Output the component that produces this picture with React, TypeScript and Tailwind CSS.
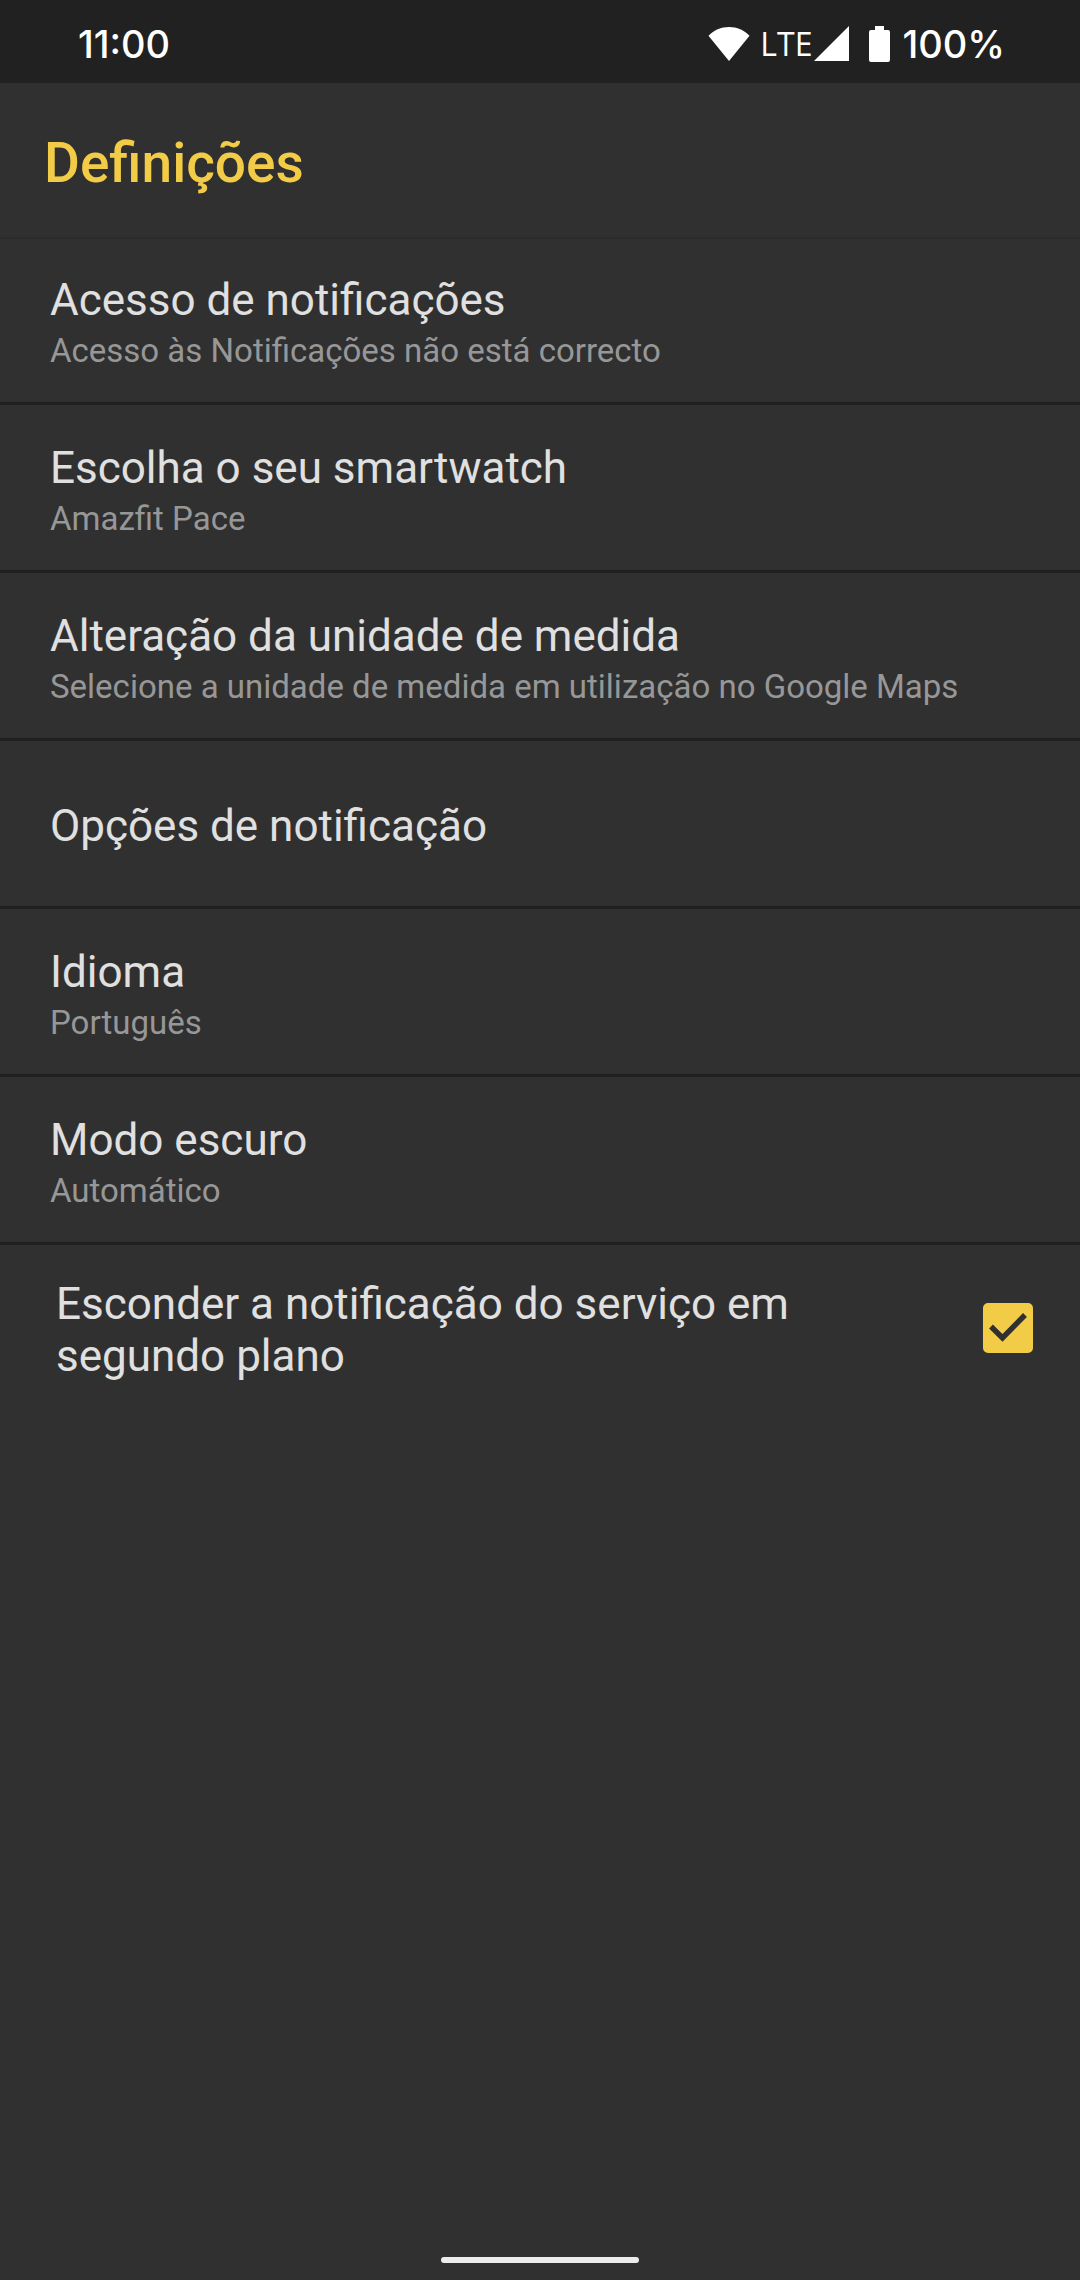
import { useState } from 'react';

interface SettingItem {
  id: string;
  title: string;
  summary?: string;
}

const settings: SettingItem[] = [
  { id: 'access', title: 'Acesso de notificações', summary: 'Acesso às Notificações não está correcto' },
  { id: 'watch', title: 'Escolha o seu smartwatch', summary: 'Amazfit Pace' },
  {
    id: 'unit',
    title: 'Alteração da unidade de medida',
    summary: 'Selecione a unidade de medida em utilização no Google Maps'
  },
  { id: 'options', title: 'Opções de notificação' },
  { id: 'language', title: 'Idioma', summary: 'Português' },
  { id: 'dark', title: 'Modo escuro', summary: 'Automático' }
];

function StatusBar() {
  return (
    <div className="flex h-[83px] items-center justify-between bg-[#212121] pt-1 pr-[75px] pl-[78px] font-['Inter',sans-serif] text-[38px] leading-[46px] font-medium text-white">
      <span>11:00</span>
      <div className="flex items-center">
        <svg className="h-[34px] w-[42px]" viewBox="0 0 42 34" fill="currentColor" aria-hidden="true">
          <path d="M21 34 0.5 8.8C6 3.2 13 0 21 0s15 3.2 20.5 8.8z" />
        </svg>
        <span className="ml-2.5 font-['Open_Sans',sans-serif] text-[32px] font-normal">LTE</span>
        <svg className="ml-0.5 h-[35px] w-[35px]" viewBox="0 0 35 35" fill="currentColor" aria-hidden="true">
          <path d="M35 0v35H0z" />
        </svg>
        <svg className="ml-5 h-9 w-[21px]" viewBox="0 0 21 36" fill="currentColor" aria-hidden="true">
          <path d="M6 0h9v4h4a2 2 0 0 1 2 2v28a2 2 0 0 1-2 2H2a2 2 0 0 1-2-2V6a2 2 0 0 1 2-2h4z" />
        </svg>
        <span className="ml-3">100%</span>
      </div>
    </div>
  );
}

function SettingRow({ item }: { item: SettingItem }) {
  return (
    <li className="border-b-3 border-[#202020]">
      <button
        type="button"
        className="flex min-h-[165px] w-full flex-col justify-center px-[50px] pt-9 pb-8 text-left"
      >
        <span className="text-[44px] leading-[52px] text-[#e0e0e0]">{item.title}</span>
        {item.summary && (
          <span className="mt-1.5 text-[33px] leading-[38px] text-[#979797]">{item.summary}</span>
        )}
      </button>
    </li>
  );
}

export default function App() {
  const [hideNotification, setHideNotification] = useState(true);

  return (
    <div className="flex min-h-screen flex-col bg-[#303030] font-['Roboto',sans-serif]">
      <StatusBar />
      <header className="px-11 pt-12 pb-[42px] shadow-[0_2px_0_#2b2b2b]">
        <h1 className="text-[55px] leading-16 font-medium text-[#f2cb47]">Definições</h1>
      </header>
      <main className="flex-1">
        <ul>
          {settings.map((item) => (
            <SettingRow key={item.id} item={item} />
          ))}
        </ul>
        <label className="flex items-center justify-between pt-[33px] pr-[47px] pl-14">
          <span className="max-w-[780px] text-[44px] leading-[52px] text-[#e0e0e0]">
            Esconder a notificação do serviço em segundo plano
          </span>
          <span className="mb-1 grid size-[50px] shrink-0">
            <input
              type="checkbox"
              checked={hideNotification}
              onChange={(e) => setHideNotification(e.target.checked)}
              className="col-start-1 row-start-1 size-[50px] appearance-none rounded-[5px] border-4 border-[#f2cb47] checked:bg-[#f2cb47]"
            />
            {hideNotification && (
              <svg
                className="pointer-events-none col-start-1 row-start-1 size-[50px]"
                viewBox="0 0 50 50"
                fill="none"
                stroke="#303030"
                strokeWidth="5.4"
                aria-hidden="true"
              >
                <path d="M8 23.5 19.5 35 42 12" />
              </svg>
            )}
          </span>
        </label>
      </main>
      <div className="flex justify-center pb-[17px]">
        <div className="h-1.5 w-[198px] rounded-full bg-[#ececec]" />
      </div>
    </div>
  );
}
